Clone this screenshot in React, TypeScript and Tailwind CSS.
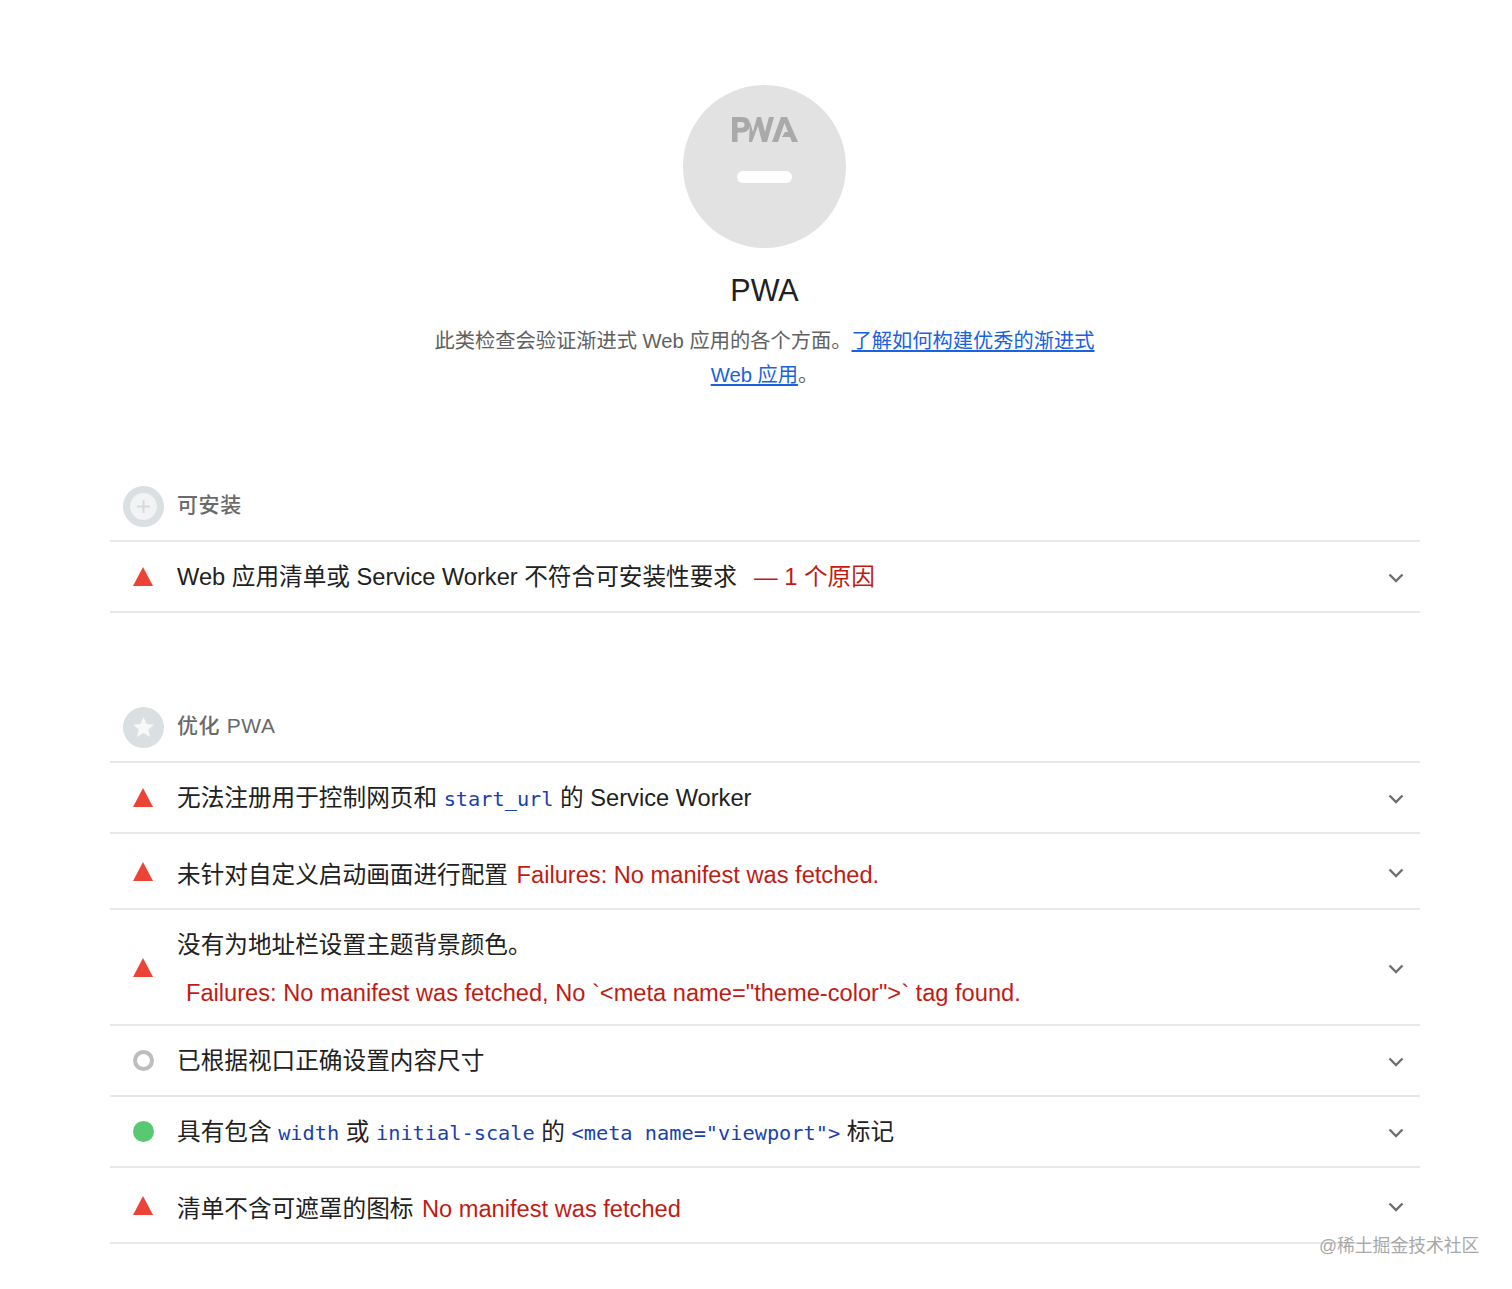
import React from 'react';

const sans = 'font-["Liberation_Sans","Noto_Sans_CJK_SC",sans-serif]';
const mono = 'font-["DejaVu_Sans_Mono","Noto_Sans_CJK_SC",monospace] text-[20.3px] text-[#1a3fb0]';
const red = 'text-[#bf1d14]';

const Fail = () => (
  <svg width="20" height="19" viewBox="0 0 20 19">
    <polygon points="10,0 20,19 0,19" fill="#eb4436" />
  </svg>
);

const Ring = () => (
  <div className="w-[21px] h-[21px] rounded-full border-4 border-[#bdbdbd]" />
);

const Pass = () => <div className="w-[21px] h-[21px] rounded-full bg-[#5ac871]" />;

const Chevron: React.FC<{ low?: boolean }> = ({ low }) => (
  <svg width="16" height="10" viewBox="0 0 16 10" className={`shrink-0 ${low ? 'mt-[4px]' : 'mt-[2px]'}`}>
    <path d="M1.5 1.5 L8 8 L14.5 1.5" fill="none" stroke="#6f6f6f" strokeWidth="2.4" />
  </svg>
);

const Row: React.FC<{ icon: React.ReactNode; h: string; textClass?: string; low?: boolean; children: React.ReactNode }> = ({
  icon,
  h,
  textClass = 'pt-[2px]',
  low,
  children,
}) => (
  <div className={`flex items-center border-b-2 border-[#e8e8e8] pl-[23px] pr-[16px] ${h}`}>
    <div className="w-[44px] shrink-0 flex items-center">{icon}</div>
    <div className={`flex-1 text-[23.65px] text-[#212121] whitespace-pre ${textClass}`}>{children}</div>
    <Chevron low={low} />
  </div>
);

const GroupHeader: React.FC<{ icon: React.ReactNode; title: string }> = ({ icon, title }) => (
  <div className="flex items-center h-[56px] pl-[13px] pb-[14px] border-b-2 border-[#e8e8e8]">
    <div className="w-[41px] h-[41px] rounded-full bg-[#dadfe2] flex items-center justify-center shrink-0">{icon}</div>
    <div className="ml-[13px] text-[21px] font-medium text-[#6a6a6a] tracking-[0.6px] -mt-[3px]">{title}</div>
  </div>
);

export default function App() {
  return (
    <div className={`relative h-[1289px] bg-white ${sans}`}>
      <div className="flex flex-col items-center pt-[85px] ml-[110px] w-[1309px]">
        <div className="w-[163px] h-[163px] rounded-full bg-[#e2e2e2] flex flex-col items-center">
          <svg width="66" height="26" viewBox="0 0 66 26" className="mt-[32px]">
            <g fill="#a9a9a9">
              <path d="M0 0 H10 C15.5 0 18 3 18 7.5 C18 12 15 15.5 10 15.5 H5.5 V25 H0 Z M5.5 5 V10.8 H9.5 C11.5 10.8 12.5 9.6 12.5 7.8 C12.5 6 11.5 5 9.5 5 Z" />
              <polygon points="17,25 20,25 26,9 30,25 35,25 42,0 37,0 33,15 29,0 25,0 21,15 18,5" />
              <polygon points="40,25 49,0 55,0 66,25 60,25 58,20 50,20 53,15 56,15 52.5,6 46,25" />
            </g>
          </svg>
          <div className="mt-[28px] w-[55px] h-[12px] rounded-full bg-white" />
        </div>
        <div className="mt-[23px] text-[30.5px] leading-[38px] text-[#212121]">PWA</div>
        <p className="mt-[15px] w-[670px] text-center text-[20.25px] leading-[34px] text-[#616161]">
          此类检查会验证渐进式 Web 应用的各个方面。
          <a className="text-[#1a62e0] underline">了解如何构建优秀的渐进式 Web 应用</a>。
        </p>
      </div>

      <div className="ml-[110px] w-[1310px] mt-[94px]">
        <GroupHeader
          title="可安装"
          icon={
            <div className="w-[27px] h-[27px] rounded-full bg-[#f2f3f4] flex items-center justify-center">
              <svg width="15" height="15" viewBox="0 0 15 15">
                <path d="M7.5 1 V14 M1 7.5 H14" stroke="#d6dadc" strokeWidth="2" />
              </svg>
            </div>
          }
        />
        <Row icon={<Fail />} h="h-[71px]">
          Web 应用清单或 Service Worker 不符合可安装性要求
          <span className={`${red} ml-[17px]`}>— 1 个原因</span>
        </Row>

        <div className="mt-[94px]">
          <GroupHeader
            title="优化 PWA"
            icon={
              <svg width="21" height="20" viewBox="0 0 24 23">
                <polygon points="12,0 15.5,8 24,8.8 17.6,14.4 19.5,23 12,18.5 4.5,23 6.4,14.4 0,8.8 8.5,8" fill="#f7f8f8" />
              </svg>
            }
          />
        </div>
        <Row icon={<Fail />} h="h-[71px]">
          无法注册用于控制网页和 <span className={mono}>start_url</span> 的 Service Worker
        </Row>
        <Row icon={<Fail />} h="h-[76px]" textClass="pt-[10px]" low>
          未针对自定义启动画面进行配置 <span className={`${red} ml-[2px]`}>Failures: No manifest was fetched.</span>
        </Row>
        <Row icon={<Fail />} h="h-[116px]" textClass="" low>
          <div className="leading-[34px] mt-[4px]">没有为地址栏设置主题背景颜色。</div>
          <div className={`${red} leading-[34px] mt-[14px] pl-[9px]`}>
            Failures: No manifest was fetched, No `&lt;meta name="theme-color"&gt;` tag found.
          </div>
        </Row>
        <Row icon={<Ring />} h="h-[71px]">
          已根据视口正确设置内容尺寸
        </Row>
        <Row icon={<Pass />} h="h-[71px]">
          具有包含 <span className={mono}>width</span> 或 <span className={mono}>initial-scale</span> 的{' '}
          <span className={mono}>&lt;meta name="viewport"&gt;</span> 标记
        </Row>
        <Row icon={<Fail />} h="h-[76px]" textClass="pt-[10px]" low>
          清单不含可遮罩的图标 <span className={`${red} ml-[2px]`}>No manifest was fetched</span>
        </Row>
      </div>

      <div className="absolute left-[1319px] top-[1234px] text-[17.8px] leading-[24px] text-[#a8a8a8] whitespace-nowrap">
        @稀土掘金技术社区
      </div>
    </div>
  );
}
